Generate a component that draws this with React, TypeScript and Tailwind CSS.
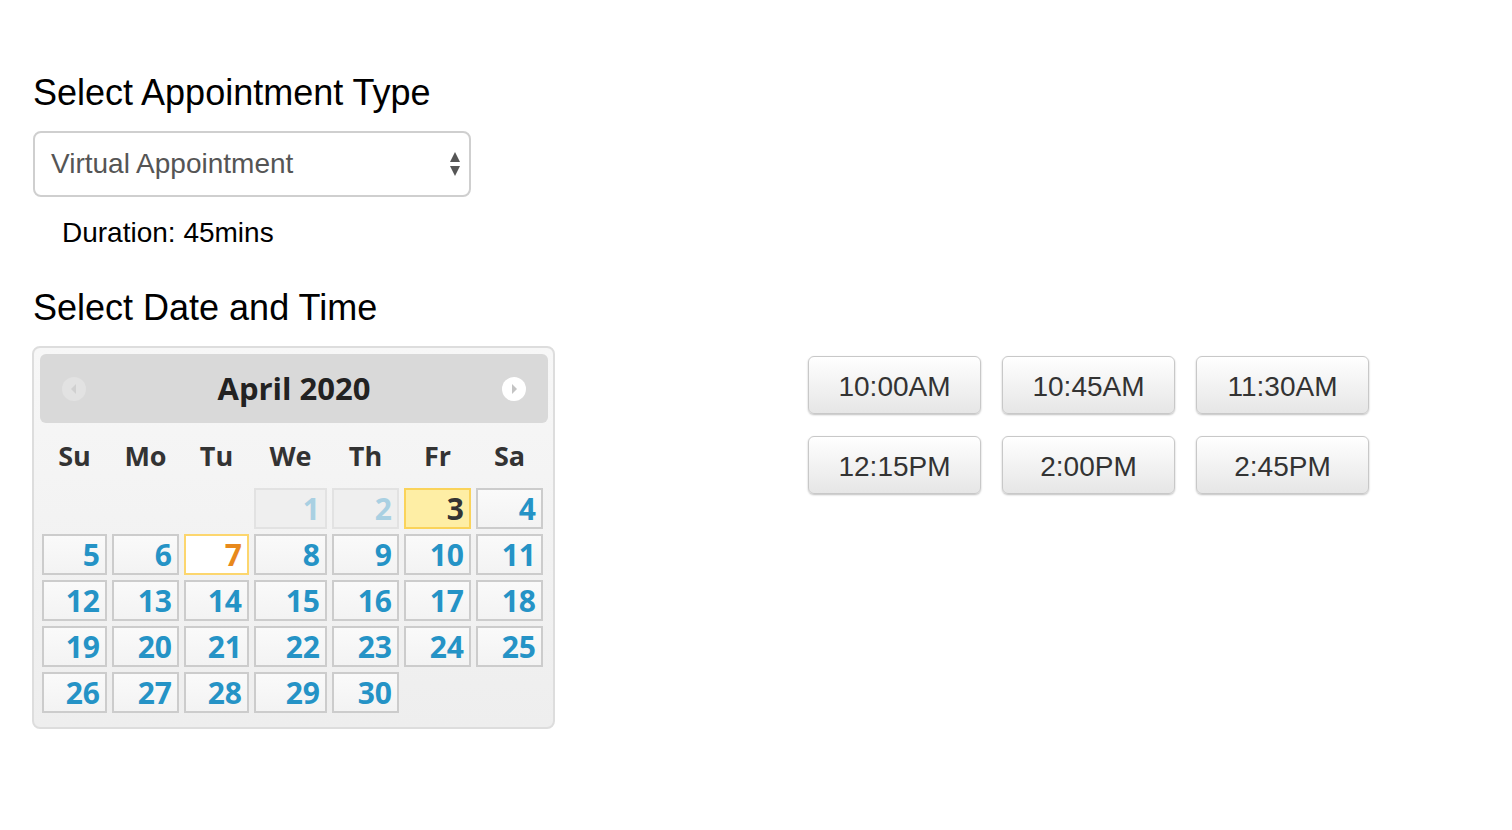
import React from 'react';

const COLS = 'grid grid-cols-[65px_67px_65px_73px_67px_67px_67px] gap-x-[5px]';
const DAY_NAMES = ['Su', 'Mo', 'Tu', 'We', 'Th', 'Fr', 'Sa'];
const TIMES = ['10:00AM', '10:45AM', '11:30AM', '12:15PM', '2:00PM', '2:45PM'];

// April 2020 starts on a Wednesday
const cells: (number | null)[] = [null, null, null, ...Array.from({ length: 30 }, (_, i) => i + 1)];

function DayCell({ day }: { day: number | null }) {
  if (day === null) return <div />;
  let cls = 'border-[#cccccc] bg-gradient-to-b from-[#fafafa] to-[#f3f3f3] text-[#2593c6]';
  if (day < 3) cls = 'border-[#e2e2e2] bg-[#efefef] text-[#a9d0e2]';
  if (day === 3) cls = 'border-[#fad35a] bg-[#feeea5] text-[#333333]';
  if (day === 7) cls = 'border-[#fcd66e] bg-white text-[#e8891c]';
  return (
    <div className={`h-[41px] border-2 flex items-center justify-end pr-[5px] ${cls}`}>
      <span className="text-[30px] font-bold leading-none">{day}</span>
    </div>
  );
}

function Calendar() {
  return (
    <div
      className="-ml-px w-[523px] border-2 border-[#dddddd] rounded-lg bg-gradient-to-b from-[#f7f7f7] to-[#eeeeee] pt-[6px] pb-[14px]"
      style={{ fontFamily: '"Open Sans", "Noto Sans", sans-serif' }}
    >
      <div className="ml-[6px] w-[508px] h-[69px] rounded-md bg-[#d9d9d9] flex items-center justify-between px-[22px]">
        <span className="w-[24px] h-[24px] rounded-full bg-[#e2e2e2] flex items-center justify-center">
          <svg width="10" height="12" viewBox="0 0 10 12"><path d="M7 1 L2 6 L7 11 Z" fill="#d0d0d0" /></svg>
        </span>
        <span className="text-[31px] font-bold text-[#222222] leading-none">April 2020</span>
        <span className="w-[24px] h-[24px] rounded-full bg-white flex items-center justify-center">
          <svg width="10" height="12" viewBox="0 0 10 12"><path d="M3 1 L8 6 L3 11 Z" fill="#c4c4c4" /></svg>
        </span>
      </div>
      <div className={`${COLS} ml-[8px] h-[65px] items-center`}>
        {DAY_NAMES.map(d => (
          <div key={d} className="text-center text-[27px] font-bold text-[#333333] leading-none">{d}</div>
        ))}
      </div>
      <div className={`${COLS} ml-[8px] gap-y-[5px]`}>
        {cells.map((d, i) => <DayCell key={i} day={d} />)}
      </div>
    </div>
  );
}

export default function App() {
  return (
    <div className="min-h-screen bg-white pl-[33px] text-black" style={{ fontFamily: '"Liberation Sans", Arial, sans-serif' }}>
      <h2 className="pt-[73px] text-[36px] leading-[40px]">Select Appointment Type</h2>

      <div className="mt-[18px] w-[438px] h-[66px] border-2 border-[#cfcfcf] rounded-lg flex items-center justify-between pl-[16px] pr-[8px]">
        <span className="text-[28px] text-[#555555]">Virtual Appointment</span>
        <svg width="12" height="26" viewBox="0 0 12 26">
          <path d="M6 1 L11 11 L1 11 Z" fill="#555555" />
          <path d="M1 15 L11 15 L6 25 Z" fill="#555555" />
        </svg>
      </div>

      <p className="mt-[20px] ml-[29px] text-[28px] leading-[32px]">Duration: 45mins</p>

      <h2 className="mt-[39px] text-[36px] leading-[40px]">Select Date and Time</h2>

      <div className="mt-[18px] flex items-start">
        <Calendar />
        <div className="ml-[253px] mt-[10px] grid grid-cols-[173px_173px_173px] gap-x-[21px] gap-y-[22px]">
          {TIMES.map(t => (
            <button
              key={t}
              className="h-[58px] pt-[3px] rounded-md border border-[#c8c8c8] bg-gradient-to-b from-white to-[#e6e6e6] shadow-[0_1px_2px_rgba(0,0,0,0.25)] text-[28px] text-[#333333]"
            >
              {t}
            </button>
          ))}
        </div>
      </div>
    </div>
  );
}
